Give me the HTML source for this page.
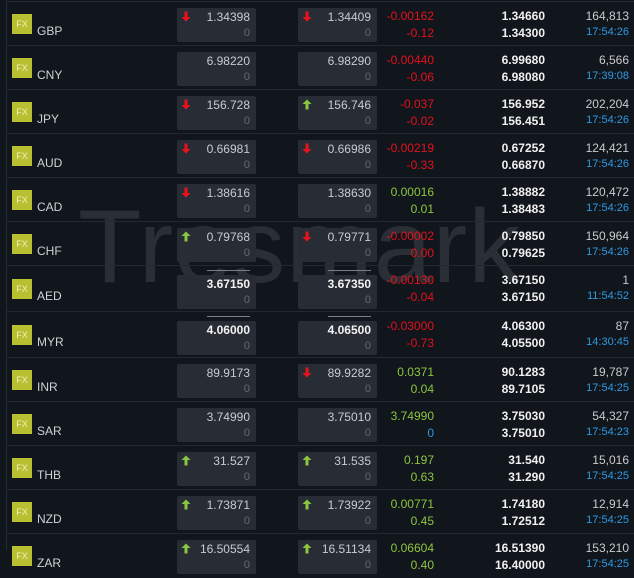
<!DOCTYPE html><html><head><meta charset="utf-8"><style>
body{margin:0;width:634px;height:550px;background:#11151c;overflow:hidden;font-family:"Liberation Sans",Arial,sans-serif;position:relative}
.vl{position:absolute;left:6px;top:0;width:1px;height:550px;background:#262b33}
.r{position:absolute;left:7px;width:627px;height:44px;border-top:1px solid #242930}
.b{position:absolute;left:5px;top:12px;width:20px;height:20px;background:#b8bf30;color:#eef0c0;font-size:9px;line-height:20px;text-align:center}
.n{position:absolute;left:30px;top:22px;font-size:12px;color:#d0d2d5}
.p{position:absolute;top:6px;width:79px;height:34px;background:#282d35;border-radius:2px}
.p1{left:170px}.p2{left:291px}
.v{position:absolute;right:6px;top:2px;font-size:12px;color:#c9cbce}
.z{position:absolute;right:6px;top:19px;font-size:11px;color:#656970}
.p svg{position:absolute;left:4px;top:3px}
.c1,.c2,.h,.l,.vo,.t{position:absolute;font-size:12px}
.c1,.h,.vo{top:7px}.c2,.l,.t{top:24px}
.c1,.c2{right:200px}.h,.l{right:89px;font-weight:bold;color:#f0f0f0}
.vo{right:5px;color:#c9cbce}.t{right:5px;color:#2e9ae0;font-size:11px}
.red{color:#e3121c}.grn{color:#8cc63f}.blu{color:#2e9ae0}
.bw .v{color:#f2f2f2;font-weight:bold}
.bw .p::before{content:"";position:absolute;left:30px;right:6px;top:-5px;height:1px;background:#7a7e84}
.wm{position:absolute;left:78px;top:188px;font-size:104px;color:#2a2e35;letter-spacing:1px}
</style></head><body>
<div class="wm">Tresmark</div>
<div class="vl"></div>
<svg width="0" height="0" style="position:absolute"><defs>
<symbol id="dn" viewBox="0 0 10 11"><path d="M5 10.5L0.5 6h3V0.5h3V6h3z" fill="#e8121c"/></symbol>
<symbol id="up" viewBox="0 0 10 11"><path d="M5 0.5L0.5 5h3v5.5h3V5h3z" fill="#8cc63f"/></symbol></defs></svg>

<div class="r" style="top:1px"><div class="b">FX</div><div class="n">GBP</div>
<div class="p p1"><svg width="10" height="11"><use href="#dn"/></svg><span class="v">1.34398</span><span class="z">0</span></div>
<div class="p p2"><svg width="10" height="11"><use href="#dn"/></svg><span class="v">1.34409</span><span class="z">0</span></div>
<div class="c1 red">-0.00162</div><div class="c2 red">-0.12</div><div class="h">1.34660</div><div class="l">1.34300</div><div class="vo">164,813</div><div class="t">17:54:26</div></div>

<div class="r" style="top:45px"><div class="b">FX</div><div class="n">CNY</div>
<div class="p p1"><span class="v">6.98220</span><span class="z">0</span></div>
<div class="p p2"><span class="v">6.98290</span><span class="z">0</span></div>
<div class="c1 red">-0.00440</div><div class="c2 red">-0.06</div><div class="h">6.99680</div><div class="l">6.98080</div><div class="vo">6,566</div><div class="t">17:39:08</div></div>

<div class="r" style="top:89px"><div class="b">FX</div><div class="n">JPY</div>
<div class="p p1"><svg width="10" height="11"><use href="#dn"/></svg><span class="v">156.728</span><span class="z">0</span></div>
<div class="p p2"><svg width="10" height="11"><use href="#up"/></svg><span class="v">156.746</span><span class="z">0</span></div>
<div class="c1 red">-0.037</div><div class="c2 red">-0.02</div><div class="h">156.952</div><div class="l">156.451</div><div class="vo">202,204</div><div class="t">17:54:26</div></div>

<div class="r" style="top:133px"><div class="b">FX</div><div class="n">AUD</div>
<div class="p p1"><svg width="10" height="11"><use href="#dn"/></svg><span class="v">0.66981</span><span class="z">0</span></div>
<div class="p p2"><svg width="10" height="11"><use href="#dn"/></svg><span class="v">0.66986</span><span class="z">0</span></div>
<div class="c1 red">-0.00219</div><div class="c2 red">-0.33</div><div class="h">0.67252</div><div class="l">0.66870</div><div class="vo">124,421</div><div class="t">17:54:26</div></div>

<div class="r" style="top:177px"><div class="b">FX</div><div class="n">CAD</div>
<div class="p p1"><svg width="10" height="11"><use href="#dn"/></svg><span class="v">1.38616</span><span class="z">0</span></div>
<div class="p p2"><span class="v">1.38630</span><span class="z">0</span></div>
<div class="c1 grn">0.00016</div><div class="c2 grn">0.01</div><div class="h">1.38882</div><div class="l">1.38483</div><div class="vo">120,472</div><div class="t">17:54:26</div></div>

<div class="r" style="top:221px"><div class="b">FX</div><div class="n">CHF</div>
<div class="p p1"><svg width="10" height="11"><use href="#up"/></svg><span class="v">0.79768</span><span class="z">0</span></div>
<div class="p p2"><svg width="10" height="11"><use href="#dn"/></svg><span class="v">0.79771</span><span class="z">0</span></div>
<div class="c1 red">-0.00002</div><div class="c2 red">0.00</div><div class="h">0.79850</div><div class="l">0.79625</div><div class="vo">150,964</div><div class="t">17:54:26</div></div>

<div class="r bw" style="top:265px;height:46px"><div class="b" style="top:13px">FX</div><div class="n" style="top:23px">AED</div>
<div class="p p1" style="top:9px"><span class="v">3.67150</span><span class="z">0</span></div>
<div class="p p2" style="top:9px"><span class="v">3.67350</span><span class="z">0</span></div>
<div class="c1 red">-0.00130</div><div class="c2 red">-0.04</div><div class="h">3.67150</div><div class="l">3.67150</div><div class="vo">1</div><div class="t">11:54:52</div></div>

<div class="r bw" style="top:311px;height:46px"><div class="b" style="top:13px">FX</div><div class="n" style="top:23px">MYR</div>
<div class="p p1" style="top:9px"><span class="v">4.06000</span><span class="z">0</span></div>
<div class="p p2" style="top:9px"><span class="v">4.06500</span><span class="z">0</span></div>
<div class="c1 red">-0.03000</div><div class="c2 red">-0.73</div><div class="h">4.06300</div><div class="l">4.05500</div><div class="vo">87</div><div class="t">14:30:45</div></div>

<div class="r" style="top:357px"><div class="b">FX</div><div class="n">INR</div>
<div class="p p1"><span class="v">89.9173</span><span class="z">0</span></div>
<div class="p p2"><svg width="10" height="11"><use href="#dn"/></svg><span class="v">89.9282</span><span class="z">0</span></div>
<div class="c1 grn">0.0371</div><div class="c2 grn">0.04</div><div class="h">90.1283</div><div class="l">89.7105</div><div class="vo">19,787</div><div class="t">17:54:25</div></div>

<div class="r" style="top:401px"><div class="b">FX</div><div class="n">SAR</div>
<div class="p p1"><span class="v">3.74990</span><span class="z">0</span></div>
<div class="p p2"><span class="v">3.75010</span><span class="z">0</span></div>
<div class="c1 grn">3.74990</div><div class="c2 blu">0</div><div class="h">3.75030</div><div class="l">3.75010</div><div class="vo">54,327</div><div class="t">17:54:23</div></div>

<div class="r" style="top:445px"><div class="b">FX</div><div class="n">THB</div>
<div class="p p1"><svg width="10" height="11"><use href="#up"/></svg><span class="v">31.527</span><span class="z">0</span></div>
<div class="p p2"><svg width="10" height="11"><use href="#up"/></svg><span class="v">31.535</span><span class="z">0</span></div>
<div class="c1 grn">0.197</div><div class="c2 grn">0.63</div><div class="h">31.540</div><div class="l">31.290</div><div class="vo">15,016</div><div class="t">17:54:25</div></div>

<div class="r" style="top:489px"><div class="b">FX</div><div class="n">NZD</div>
<div class="p p1"><svg width="10" height="11"><use href="#up"/></svg><span class="v">1.73871</span><span class="z">0</span></div>
<div class="p p2"><svg width="10" height="11"><use href="#up"/></svg><span class="v">1.73922</span><span class="z">0</span></div>
<div class="c1 grn">0.00771</div><div class="c2 grn">0.45</div><div class="h">1.74180</div><div class="l">1.72512</div><div class="vo">12,914</div><div class="t">17:54:25</div></div>

<div class="r" style="top:533px"><div class="b">FX</div><div class="n">ZAR</div>
<div class="p p1"><svg width="10" height="11"><use href="#up"/></svg><span class="v">16.50554</span><span class="z">0</span></div>
<div class="p p2"><svg width="10" height="11"><use href="#up"/></svg><span class="v">16.51134</span><span class="z">0</span></div>
<div class="c1 grn">0.06604</div><div class="c2 grn">0.40</div><div class="h">16.51390</div><div class="l">16.40000</div><div class="vo">153,210</div><div class="t">17:54:25</div></div>
</body></html>
